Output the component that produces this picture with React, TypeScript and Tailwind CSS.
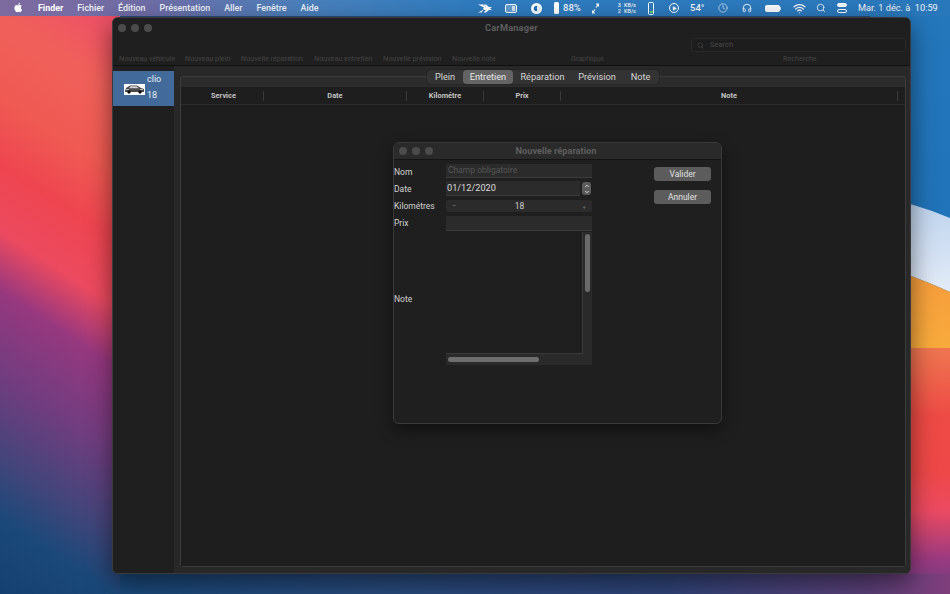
import React from "react";
import { Search, ChevronUp, ChevronDown, Clock, Headphones, Wifi, Play } from "lucide-react";

const font = "font-['Roboto','Liberation_Sans',sans-serif]";

function AppleLogo() {
  return (
    <svg viewBox="0 0 24 24" className="w-[11px] h-[11px] fill-white">
      <path d="M17.05 12.54c-.03-2.6 2.12-3.85 2.22-3.91-1.21-1.77-3.09-2.01-3.76-2.04-1.6-.16-3.12.94-3.93.94-.81 0-2.06-.92-3.39-.89-1.74.03-3.35 1.01-4.25 2.57-1.81 3.14-.46 7.8 1.3 10.35.86 1.25 1.89 2.65 3.24 2.6 1.3-.05 1.79-.84 3.36-.84 1.57 0 2.01.84 3.39.81 1.4-.03 2.28-1.27 3.14-2.53.99-1.45 1.4-2.85 1.42-2.92-.03-.01-2.72-1.04-2.74-4.14zM14.47 4.9c.72-.87 1.2-2.08 1.07-3.28-1.03.04-2.28.69-3.02 1.55-.66.77-1.24 2-1.09 3.18 1.15.09 2.33-.59 3.04-1.45z" />
    </svg>
  );
}

function StatusIcons() {
  return (
    <div className="flex items-center text-[#f2f4f8] h-full">
      <svg viewBox="0 0 14 9" className="w-[14px] h-[9px] fill-white ml-[478px]">
        <path d="M0 .5h5l2.500 2.500h-2.500zM5.500.5h2.500l3 2.500h3l-2 1.500 2 1.500h-3l-3 2.500h-2.500l2.500-2.500h-2l-1-1.500 1-1.500h2zM0 8.500l5-2.500h.5l-2 2.500z" />
      </svg>
      <div className="ml-[13px] w-[12px] h-[9px] rounded-[2px] border border-white bg-white/25 flex justify-end p-[1px]">
        <div className="w-[3px] bg-white/70" />
      </div>
      <div className="ml-[14px] w-[11px] h-[11px] rounded-full bg-white flex items-center justify-center">
        <div className="w-[7px] h-[7px] rounded-full border border-white flex overflow-hidden bg-[#1f6fb8]">
          <div className="w-1/2 bg-[#1f6fb8]" />
          <div className="w-1/2 bg-white" />
        </div>
      </div>
      <div className="ml-[12px] w-[5px] h-[12px] rounded-[1.500px] bg-white" />
      <span className="ml-[4px] text-[9.500px] font-medium w-[18px] leading-none">88%</span>
      <svg viewBox="0 0 7 11" className="ml-[11px] w-[7px] h-[11px] stroke-white fill-none" strokeWidth="1.200">
        <path d="M4 4.500 6.500 1M4 1h2.500v2.500M3 6.500.5 10M3 10H.5V7.500" />
      </svg>
      <div className="ml-[14px] w-[8px] text-[5.500px] leading-[6px] font-medium text-right">3<br />2</div>
      <div className="ml-[3px] w-[12px] text-[5.500px] leading-[6px] font-medium whitespace-nowrap">KB/s<br />KB/s</div>
      <div className="ml-[12px] w-[6px] h-[13px] rounded-[1.500px] border border-white flex items-end justify-center pb-[1px]">
        <div className="w-[3px] h-[2px] bg-[#5fd36a]" />
      </div>
      <div className="ml-[15px] w-[10px] h-[10px] rounded-full border border-white flex items-center justify-center">
        <Play size={5} className="fill-white stroke-white" />
      </div>
      <span className="ml-[11px] text-[9.500px] font-medium w-[16px] leading-none">54°</span>
      <Clock size={10} className="ml-[12px]" strokeWidth={1.500} />
      <Headphones size={10} className="ml-[14px]" strokeWidth={2.200} />
      <div className="ml-[13px] w-[15px] h-[7px] rounded-[2px] bg-white/95 border border-white/70" />
      <div className="w-[1px] h-[3px] bg-white/70" />
      <Wifi size={13} className="ml-[12px]" strokeWidth={2.400} />
      <Search size={10} className="ml-[10px]" strokeWidth={2} />
      <div className="ml-[11px] w-[10px] flex flex-col gap-[1.500px]">
        <div className="h-[4px] rounded-full bg-white/90 border border-white" />
        <div className="h-[4px] rounded-full border border-white" />
      </div>
      <span className="ml-[11px] text-[9.200px] font-normal whitespace-pre leading-none">Mar. 1 déc. à  10:59</span>
    </div>
  );
}

function MenuBar() {
  const items = ["Fichier", "Édition", "Présentation", "Aller", "Fenêtre", "Aide"];
  return (
    <div className="absolute left-0 top-0 w-[950px] h-[16px] bg-[linear-gradient(90deg,#7d6a9e_0%,#6f6ea8_16%,#4a80bc_32%,#2f7cbf_50%,#2a78bc_100%)] text-white text-[8.900px] flex items-center">
      <div className="absolute left-[13px] top-[2px]">
        <AppleLogo />
      </div>
      <div className="absolute left-[38px] top-0 h-full pt-[1px] flex items-center gap-[14px] font-medium text-[#eef2f8]">
        <span className="font-bold text-white">Finder</span>
        {items.map((m) => (
          <span key={m}>{m}</span>
        ))}
      </div>
      <div className="absolute left-0 top-0 h-full">
        <StatusIcons />
      </div>
    </div>
  );
}

function Lights() {
  return (
    <div className="flex gap-[5px]">
      <div className="w-[8px] h-[8px] rounded-full bg-[#4b4b4b]" />
      <div className="w-[8px] h-[8px] rounded-full bg-[#4b4b4b]" />
      <div className="w-[8px] h-[8px] rounded-full bg-[#4b4b4b]" />
    </div>
  );
}

function Toolbar() {
  const labels = [
    ["Nouveau véhicule", "w-[66px]"],
    ["Nouveau plein", "w-[56px]"],
    ["Nouvelle réparation", "w-[73px]"],
    ["Nouveau entretien", "w-[69px]"],
    ["Nouvelle prévision", "w-[69px]"],
    ["Nouvelle note", "w-[119px]"],
    ["Graphique", "w-[212px]"],
    ["Recherche", "w-[36px]"],
  ];
  return (
    <div className="h-[48px] bg-[#1f1f1f] border-b border-[#101010] relative">
      <div className="h-[19px] flex items-center pl-[5px] relative">
        <Lights />
        <div className="absolute left-[372px] top-[3px] text-[9.200px] font-bold text-[#5d5d5d] tracking-[0.2px]">CarManager</div>
      </div>
      <div className="flex justify-end pr-[4px] mt-[1px]">
        <div className="w-[215px] h-[14px] rounded-[3px] border border-[#2a2a2a] bg-[#1d1d1d] flex items-center pl-[5px] gap-[6px] text-[#4a4a4a]">
          <Search size={7} strokeWidth={2} />
          <span className="text-[7.500px]">Search</span>
        </div>
      </div>
      <div className="flex items-center pl-[6px] mt-[3px] text-[7.200px] text-[#444444] h-[9px]">
        {labels.map(([l, w]) => (
          <span key={l} className={`${w} whitespace-nowrap shrink-0`}>{l}</span>
        ))}
      </div>
    </div>
  );
}

function Sidebar() {
  return (
    <div className="w-[61px] shrink-0 bg-[#1f1f1f] pt-[5px]">
      <div className="h-[35px] bg-[#426b9b] relative text-[#e8edf3] text-[9px]">
        <span className="absolute left-[34px] top-[2px]">clio</span>
        <span className="absolute left-[34px] top-[18px]">18</span>
        <div className="absolute left-[11px] top-[13px] w-[21px] h-[11px] bg-white flex items-center justify-center">
          <svg viewBox="0 0 21 11" className="w-[21px] h-[11px]">
            <path d="M1 7 2 4 6 1.500h7l4 2.500 3 1v3H1z" fill="#4a4a4a" />
            <path d="M6.500 2.200h6l2.500 2H5z" fill="#d0d0d0" />
            <path d="M2 5.500h3M16 5.500h3" stroke="#ddd" strokeWidth="0.800" />
            <circle cx="5" cy="8" r="1.700" fill="#111" />
            <circle cx="16" cy="8" r="1.700" fill="#111" />
          </svg>
        </div>
      </div>
    </div>
  );
}

function Tabs() {
  const tabs = [
    ["Plein", "w-[36px]", false],
    ["Entretien", "w-[50px]", true],
    ["Réparation", "w-[59px]", false],
    ["Prévision", "w-[50px]", false],
    ["Note", "w-[37px]", false],
  ] as const;
  return (
    <div className="absolute left-[246px] -top-[7px] h-[14px] w-[232px] rounded-[4px] bg-[#333333] flex items-center text-[9.200px] text-[#d6d6d6] shadow-[0_0_1px_#000]">
      {tabs.map(([t, w, a]) => (
        <div
          key={t}
          className={`${w} h-full flex items-center justify-center rounded-[4px] ${a ? "bg-[#646464] text-[#e8e8e8]" : ""}`}
        >
          {t}
        </div>
      ))}
    </div>
  );
}

function TableHeader() {
  const cols = [
    ["Service", "w-[83px] pl-[3px]"],
    ["Date", "w-[143px]"],
    ["Kilométre", "w-[77px]"],
    ["Prix", "w-[77px]"],
    ["Note", "w-[337px]"],
  ];
  return (
    <div className="h-[18px] flex items-center border-b border-[#2c2c2c] bg-[#1e1e1e] text-[7.400px] font-bold text-[#c4c4c4]">
      {cols.map(([c, w]) => (
        <div key={c} className={`${w} h-[10px] flex items-center justify-center border-r border-[#3a3a3a] shrink-0`}>
          {c}
        </div>
      ))}
    </div>
  );
}

function Field({ className, children }: { className: string; children?: React.ReactNode }) {
  return (
    <div className={`bg-[#2b2b2b] border-b border-[#3c3c3c] flex items-center ${className}`}>{children}</div>
  );
}

function Dialog() {
  return (
    <div className="absolute left-[280px] top-[76px] w-[329px] h-[282px] rounded-[6px] bg-[#1f1f1f] border border-[#3a3a3a] shadow-[0_6px_16px_rgba(0,0,0,0.45)] overflow-hidden">
      <div className="h-[17px] bg-[#2a2a2a] border-b border-[#141414] flex items-center pl-[5px] relative">
        <Lights />
        <div className="absolute left-0 right-0 top-0 h-full flex items-center justify-center text-[9.200px] font-bold text-[#5e5e5e] pr-[3px]">
          Nouvelle réparation
        </div>
      </div>
      <div className="flex">
        <div className="w-[52px] shrink-0 text-[8.500px] text-[#d2d2d2] relative">
          <div className="h-[14px] mt-[5px] flex items-center">Nom</div>
          <div className="h-[14px] mt-[3px] flex items-center">Date</div>
          <div className="h-[14px] mt-[3px] flex items-center">Kilométres</div>
          <div className="h-[14px] mt-[3px] flex items-center">Prix</div>
          <div className="h-[14px] mt-[62px] flex items-center">Note</div>
        </div>
        <div className="w-[146px] shrink-0 pt-[4px]">
          <Field className="h-[14px] pl-[2px] text-[8.500px] text-[#555555]">Champ obligatoire</Field>
          <div className="flex mt-[3px] h-[15px] items-center">
            <Field className="h-[15px] w-[134px] pl-[1px] text-[9.200px] text-[#dadada]">01/12/2020</Field>
            <div className="ml-[2px] w-[9px] h-[13px] rounded-[3px] bg-[#5a5a5a] flex flex-col items-center justify-center text-white">
              <ChevronUp size={6} strokeWidth={3} />
              <ChevronDown size={6} strokeWidth={3} />
            </div>
          </div>
          <div className="mt-[4px] h-[12px] rounded-[2px] bg-[#2b2b2b] flex items-center justify-between px-[6px] text-[8.500px] text-[#d0d0d0]">
            <span className="text-[#777777] text-[7px]">–</span>
            <span>18</span>
            <span className="text-[#777777] text-[6px]">+</span>
          </div>
          <Field className="h-[15px] mt-[4px]" />
          <div className="h-[133px] mt-[1px] bg-[#2a2a2a] flex flex-col">
            <div className="flex h-[122px]">
              <div className="w-[137px] bg-[#1f1f1f] border-r border-[#3a3a3a] border-b" />
              <div className="flex-1 pt-[2px] flex justify-center">
                <div className="w-[5px] h-[58px] rounded-full bg-[#6a6a6a]" />
              </div>
            </div>
            <div className="flex-1 flex items-center pl-[2px]">
              <div className="w-[91px] h-[5px] rounded-full bg-[#6e6e6e]" />
            </div>
          </div>
        </div>
        <div className="ml-[62px] pt-[7px] flex flex-col gap-[9px]">
          <div className="w-[57px] h-[14px] rounded-[3px] bg-[#5c5c5c] flex items-center justify-center text-[8.500px] text-[#e0e0e0]">Valider</div>
          <div className="w-[57px] h-[14px] rounded-[3px] bg-[#5c5c5c] flex items-center justify-center text-[8.500px] text-[#e0e0e0]">Annuler</div>
        </div>
      </div>
    </div>
  );
}

function Window() {
  return (
    <div className="absolute left-[112px] top-[17px] w-[799px] h-[557px] rounded-[6px] bg-[#1f1f1f] border border-[#3b3b3b] shadow-[0_8px_24px_rgba(0,0,0,0.5)] overflow-hidden flex flex-col">
      <Toolbar />
      <div className="flex-1 flex min-h-0 relative">
        <Sidebar />
        <div className="flex-1 bg-[#282828] pl-[6px] pr-[4px] pb-[6px] pt-[10px] relative">
          <div className="h-full rounded-[3px] border border-[#3c3c3c] bg-[#2c2c2c] pt-[10px] relative">
            <Tabs />
            <div className="h-full bg-[#1e1e1e]">
              <TableHeader />
            </div>
          </div>
        </div>
        <Dialog />
      </div>
    </div>
  );
}

function RightWallpaper() {
  return (
    <svg viewBox="0 0 80 594" className="absolute left-[870px] top-0 w-[80px] h-[594px]">
      <defs>
        <linearGradient id="blue" x1="0" y1="0" x2="0" y2="1">
          <stop offset="0" stopColor="#2477bb" />
          <stop offset="1" stopColor="#1a6cb4" />
        </linearGradient>
        <linearGradient id="band" x1="0" y1="0" x2="0" y2="1">
          <stop offset="0" stopColor="#bcd2ec" />
          <stop offset="1" stopColor="#e3ebf8" />
        </linearGradient>
        <linearGradient id="orange" x1="0" y1="0" x2="0" y2="1">
          <stop offset="0" stopColor="#f59a3c" />
          <stop offset="1" stopColor="#f8ab3c" />
        </linearGradient>
        <linearGradient id="red" x1="0" y1="0" x2="0" y2="1">
          <stop offset="0" stopColor="#ee7650" />
          <stop offset="0.28" stopColor="#ee4a45" />
          <stop offset="0.5" stopColor="#ee4848" />
          <stop offset="0.66" stopColor="#ec4a62" />
          <stop offset="0.86" stopColor="#9a3a80" />
          <stop offset="1" stopColor="#6a4080" />
        </linearGradient>
      </defs>
      <rect x="0" y="0" width="80" height="594" fill="url(#blue)" />
      <path d="M0 195Q45 203 80 218V292Q45 276 0 262Z" fill="url(#band)" />
      <path d="M0 262Q45 276 80 292V350H0Z" fill="url(#orange)" />
      <rect x="0" y="348" width="80" height="246" fill="url(#red)" />
    </svg>
  );
}

export default function App() {
  return (
    <div className={`relative w-[950px] h-[594px] overflow-hidden text-white ${font} bg-[#2a4a7c]`}>
      <RightWallpaper />
      <div className="absolute left-0 top-0 w-[120px] h-[594px] bg-[linear-gradient(213deg,#ec4a6c_0%,#f0605a_14%,#ef5a52_26%,#ee4550_36%,#ec4a60_46%,#96387f_55%,#6f3d7f_68%,#42457a_80%,#1a4879_89%,#134070_100%)]" />
      <div className="absolute left-[120px] top-[574px] w-[830px] h-[20px] bg-[linear-gradient(90deg,#1a4879_0%,#284a7c_30%,#2f4478_65%,#5a4078_90%,#7f3e7c_100%)]" />
      <MenuBar />
      <Window />
    </div>
  );
}
